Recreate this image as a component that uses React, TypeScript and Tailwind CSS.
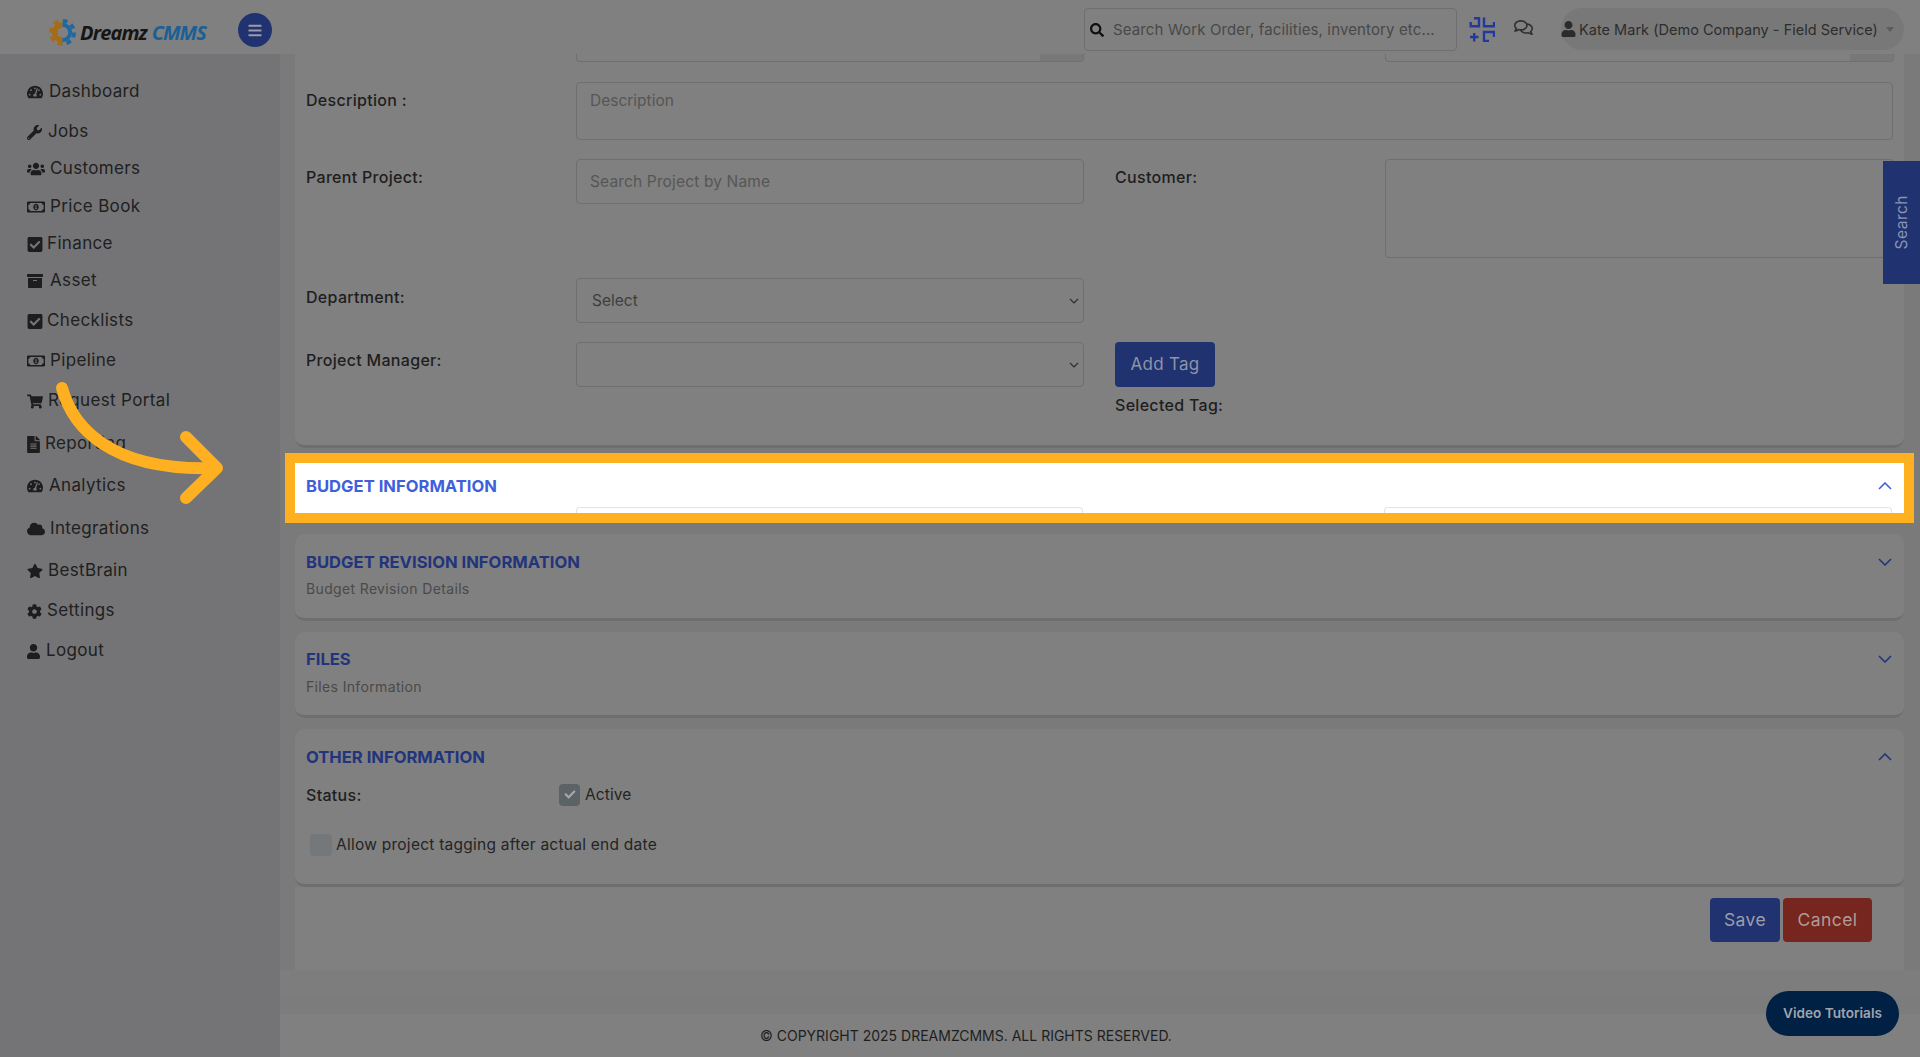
import React from "react";
import {
  FaTachometerAlt, FaWrench, FaUsers, FaRegMoneyBillAlt, FaCheckSquare, FaArchive,
  FaShoppingCart, FaFileAlt, FaCloud, FaStar, FaCog, FaUser, FaBars, FaSearch, FaRegComments, FaCheck,
} from "react-icons/fa";

const nav = [
  { label: "Dashboard", Icon: FaTachometerAlt, icon: "w-[16px] h-[16px]", col: "w-[22px]", row: "mt-0" },
  { label: "Jobs", Icon: FaWrench, icon: "w-[15px] h-[15px]", col: "w-[21px]", row: "mt-[10px]" },
  { label: "Customers", Icon: FaUsers, icon: "w-[18px] h-[16px]", col: "w-[23px]", row: "mt-[7px]" },
  { label: "Price Book", Icon: FaRegMoneyBillAlt, icon: "w-[18px] h-[18px]", col: "w-[23px]", row: "mt-[8px]" },
  { label: "Finance", Icon: FaCheckSquare, icon: "w-[16px] h-[17px]", col: "w-[20px]", row: "mt-[7px]" },
  { label: "Asset", Icon: FaArchive, icon: "w-[16px] h-[16px]", col: "w-[23px]", row: "mt-[7px]" },
  { label: "Checklists", Icon: FaCheckSquare, icon: "w-[16px] h-[17px]", col: "w-[20px]", row: "mt-[10px]" },
  { label: "Pipeline", Icon: FaRegMoneyBillAlt, icon: "w-[18px] h-[18px]", col: "w-[23px]", row: "mt-[10px]" },
  { label: "Request Portal", Icon: FaShoppingCart, icon: "w-[16px] h-[15px]", col: "w-[21px]", row: "mt-[10px]" },
  { label: "Reporting", Icon: FaFileAlt, icon: "w-[13px] h-[17px]", col: "w-[18px]", row: "mt-[13px]" },
  { label: "Analytics", Icon: FaTachometerAlt, icon: "w-[16px] h-[16px]", col: "w-[22px]", row: "mt-[12px]" },
  { label: "Integrations", Icon: FaCloud, icon: "w-[18px] h-[16px]", col: "w-[23px]", row: "mt-[13px]" },
  { label: "BestBrain", Icon: FaStar, icon: "w-[16px] h-[16px]", col: "w-[21px]", row: "mt-[12px]" },
  { label: "Settings", Icon: FaCog, icon: "w-[15px] h-[15px]", col: "w-[20px]", row: "mt-[10px]" },
  { label: "Logout", Icon: FaUser, icon: "w-[13px] h-[15px]", col: "w-[19px]", row: "mt-[10px]" },
];

const labelCls = "text-[16px] font-medium text-[#1e1e1e] tracking-[0.3px]";
const fieldCls = "border border-[#6f6f6f] rounded-[4px] bg-[#808080]";
const headCls = "text-[16.6px] font-bold tracking-[0px]";

function Chevron({ up, cls }: { up?: boolean; cls: string }) {
  return (
    <svg viewBox="0 0 14 8" className={"w-[14px] h-[8px] " + cls} fill="none" stroke="currentColor" strokeWidth="1.6">
      <polyline points={up ? "1,7 7,1 13,7" : "1,1 7,7 13,1"} />
    </svg>
  );
}

function SelectBox({ children }: { children?: React.ReactNode }) {
  return (
    <div className={"w-[508px] h-[45px] flex items-center justify-between pl-[15px] pr-[4px] " + fieldCls}>
      <span className="text-[15.5px] text-[#3e3e3e]">{children}</span>
      <svg viewBox="0 0 10 6" className="w-[10px] h-[6px] text-[#2e2e2e]" fill="none" stroke="currentColor" strokeWidth="1.2">
        <polyline points="1,1 5,5 9,1" />
      </svg>
    </div>
  );
}

function Logo() {
  return (
    <div className="flex items-center ml-[49px] w-[189px] mt-[18px]">
      <svg viewBox="0 0 28 30" className="w-[27px] h-[29px] shrink-0">
        <defs>
          <clipPath id="lh"><rect x="0" y="0" width="14" height="30" /></clipPath>
          <clipPath id="rh"><rect x="14" y="0" width="14" height="30" /></clipPath>
        </defs>
        <g clipPath="url(#lh)" fill="none" stroke="#a46c18">
          <circle cx="14" cy="15" r="8" strokeWidth="6" />
          <circle cx="14" cy="15" r="12" strokeWidth="4" strokeDasharray="5 4.4" />
        </g>
        <g clipPath="url(#rh)" fill="none" stroke="#1f68a0">
          <circle cx="14" cy="15" r="8" strokeWidth="4" />
          <circle cx="14" cy="15" r="12" strokeWidth="4" strokeDasharray="5 4.4" />
        </g>
        <path d="M9 12h7M10 15h6M9 18h7" stroke="#808080" strokeWidth="1.3" />
      </svg>
      <span className="ml-[4px] text-[20px] font-bold italic text-[#161616] font-['Open_Sans',sans-serif] tracking-[-0.9px] leading-none">Dreamz</span>
      <span className="ml-[5px] text-[20px] font-bold italic text-[#1a5f96] font-['Open_Sans',sans-serif] tracking-[-1px] leading-none">CMMS</span>
    </div>
  );
}

function ExitIcon() {
  return (
    <svg viewBox="0 0 26 25" className="w-[26px] h-[25px] text-[#22389a]" fill="none" stroke="currentColor" strokeWidth="2.4">
      <path d="M1.7 5V9.3H10V1.2H5" />
      <path d="M15 0.5V9.3H25V5" />
      <path d="M1 20H9.5M5.2 16V24.5" />
      <path d="M25 20V15H15V24H20" />
    </svg>
  );
}

export default function App() {
  return (
    <div className="relative w-full h-[1057px] overflow-hidden flex flex-col bg-[#7a7a7a] font-['Inter','Noto_Sans',sans-serif]">
      {/* header */}
      <header className="h-[54px] shrink-0 flex items-start bg-[#808080] relative z-10">
        <Logo />
        <button className="w-[34px] h-[34px] mt-[13px] rounded-full bg-[#20326f] flex items-center justify-center text-[#9a9ca8]">
          <FaBars className="w-[14px] h-[15px]" />
        </button>
        <div className="ml-auto flex items-start mt-[8px]">
          <div className="w-[373px] h-[43px] border border-[#6f6f6f] rounded-[4px] flex items-center pl-[5px]">
            <FaSearch className="w-[14px] h-[14px] text-[#101010]" />
            <span className="ml-[9px] mt-[1px] text-[15px] text-[#484848] tracking-[0.13px] whitespace-nowrap">Search Work Order, facilities, inventory etc...</span>
          </div>
          <div className="ml-[12px] mt-[9px]"><ExitIcon /></div>
          <FaRegComments className="ml-[19px] mt-[11px] w-[19px] h-[17px] text-[#303030]" />
          <div className="ml-[28px] mr-[16px] w-[343px] h-[42px] rounded-full bg-[#787878] flex items-center">
            <FaUser className="w-[15px] h-[16px] text-[#2b2b2b]" />
            <span className="ml-[3px] mt-[2px] text-[14.5px] text-[#2d2d2d] tracking-[0.02px] whitespace-nowrap">Kate Mark (Demo Company - Field Service)</span>
            <span className="ml-[8px] w-0 h-0 border-x-[4px] border-x-transparent border-t-[5px] border-t-[#5c5c5c]" />
          </div>
        </div>
      </header>

      <div className="flex flex-1 min-h-0">
        {/* sidebar */}
        <aside className="w-[280px] shrink-0 bg-[#747476] pt-[23px] pl-[27px]">
          <ul>
            {nav.map(({ label, Icon, icon, col, row }) => (
              <li key={label} className={"h-[30px] flex items-center " + row}>
                <span className={"shrink-0 " + col}>
                  <Icon className={"text-[#1d1d1d] " + icon} />
                </span>
                <span className="text-[17px] text-[#202020] tracking-[0.35px]">{label}</span>
              </li>
            ))}
          </ul>
        </aside>

        {/* main */}
        <main className="flex-1 min-w-0 flex flex-col">
          <div className="pl-[15px] pr-[16px]">
            {/* basic info card */}
            <section className="h-[394px] bg-[#808080] rounded-b-[10px] border-b-[3px] border-[#6e6e6e] pl-[11px] pr-[10px]">
              <div className="flex h-[8px]">
                <div className="ml-[270px] w-[508px] border border-t-0 border-[#6f6f6f] rounded-b-[4px] flex justify-end">
                  <div className="w-[43px] bg-[#787878] rounded-br-[4px]" />
                </div>
                <div className="ml-[301px] w-[509px] border border-t-0 border-[#6f6f6f] rounded-b-[4px] flex justify-end">
                  <div className="w-[43px] bg-[#787878] rounded-br-[4px]" />
                </div>
              </div>

              <div className="flex mt-[20px]">
                <div className={"w-[270px] pt-[6px] " + labelCls}>Description :</div>
                <textarea
                  readOnly
                  placeholder="Description"
                  className={"w-[1317px] h-[58px] px-[13px] py-[6px] resize-none text-[15.5px] placeholder:text-[#565656] outline-none " + fieldCls}
                />
              </div>

              <div className="flex mt-[19px]">
                <div className={"w-[270px] pt-[6px] " + labelCls}>Parent Project:</div>
                <input
                  readOnly
                  placeholder="Search Project by Name"
                  className={"w-[508px] h-[45px] px-[13px] text-[15.5px] tracking-[0.15px] placeholder:text-[#565656] outline-none " + fieldCls}
                />
                <div className={"ml-[31px] w-[270px] pt-[6px] " + labelCls}>Customer:</div>
                <div className={"w-[509px] h-[99px] " + fieldCls} />
              </div>

              <div className="flex mt-[20px]">
                <div className={"w-[270px] pt-[7px] " + labelCls}>Department:</div>
                <SelectBox>Select</SelectBox>
              </div>

              <div className="flex mt-[19px]">
                <div className={"w-[270px] pt-[6px] " + labelCls}>Project Manager:</div>
                <SelectBox />
                <div className="ml-[31px]">
                  <button className="w-[100px] h-[45px] rounded-[4px] bg-[#20326f] text-[17px] text-[#8f94a8] tracking-[0.3px]">Add Tag</button>
                  <div className={"mt-[6px] " + labelCls}>Selected Tag:</div>
                </div>
              </div>
            </section>

            {/* highlighted section */}
            <section className="mt-[15px] h-[50px] bg-white outline-[10px] outline-solid outline-[#ffb020] relative z-10 pl-[11px] pr-[12px] overflow-hidden">
              <div className="h-[44px] flex items-center justify-between pt-[2px]">
                <h2 className={headCls + " text-[#3f5fdb]"}>BUDGET INFORMATION</h2>
                <Chevron up cls="text-[#3f5fdb]" />
              </div>
              <div className="flex h-[8px]">
                <div className="ml-[270px] w-[508px] border border-b-0 border-[#e3e3e3] rounded-t-[4px]" />
                <div className="ml-[301px] w-[509px] border border-b-0 border-[#e3e3e3] rounded-t-[4px]" />
              </div>
            </section>

            {/* collapsed sections */}
            <div className="mt-[21px] bg-[#808080] rounded-[10px] border-b-[3px] border-[#6e6e6e] h-[87px] pl-[11px] pr-[12px] pt-[16px]">
              <div className="flex items-center justify-between">
                <h2 className={headCls + " text-[#22347c]"}>BUDGET REVISION INFORMATION</h2>
                <Chevron cls="text-[#22347c]" />
              </div>
              <p className="mt-[3px] text-[14px] text-[#4a4a4a] tracking-[0.35px]">Budget Revision Details</p>
            </div>

            <div className="mt-[11px] bg-[#808080] rounded-[10px] border-b-[3px] border-[#6e6e6e] h-[86px] pl-[11px] pr-[12px] pt-[15px]">
              <div className="flex items-center justify-between">
                <h2 className={headCls + " text-[#22347c]"}>FILES</h2>
                <Chevron cls="text-[#22347c]" />
              </div>
              <p className="mt-[4px] text-[14px] text-[#4a4a4a] tracking-[0.35px]">Files Information</p>
            </div>

            <div className="mt-[11px] bg-[#808080] rounded-[10px] border-b-[3px] border-[#6e6e6e] h-[158px] pl-[11px] pr-[12px] pt-[16px]">
              <div className="flex items-center justify-between">
                <h2 className={headCls + " text-[#22347c]"}>OTHER INFORMATION</h2>
                <Chevron up cls="text-[#22347c]" />
              </div>
              <div className="flex items-center mt-[14px] h-[22px]">
                <div className={"w-[253px] " + labelCls}>Status:</div>
                <span className="w-[21px] h-[22px] rounded-[4px] bg-[#5c6366] flex items-center justify-center">
                  <FaCheck className="w-[12px] h-[11px] text-[#a5a8a8]" />
                </span>
                <span className="ml-[5px] text-[15.5px] text-[#242424] tracking-[0.1px]">Active</span>
              </div>
              <div className="flex items-center mt-[28px] h-[22px] pl-[4px]">
                <span className="w-[22px] h-[22px] rounded-[4px] bg-[#74787b]" />
                <span className="ml-[4px] text-[15.5px] text-[#242424] tracking-[0.25px]">Allow project tagging after actual end date</span>
              </div>
            </div>

            {/* actions */}
            <div className="h-[83px] bg-[#808080] flex justify-end items-start pt-[11px] pr-[32px] gap-[3px]">
              <button className="w-[70px] h-[44px] rounded-[4px] bg-[#20326f] text-[17.5px] text-[#9a9eb0] tracking-[0.4px]">Save</button>
              <button className="w-[89px] h-[44px] rounded-[4px] bg-[#76261e] text-[17.5px] text-[#b09c98] tracking-[0.4px]">Cancel</button>
            </div>
          </div>

          <div className="h-[25px] bg-[#7d7d7d]" />
          <div className="h-[19px] bg-[#7c7c7c]" />
          {/* footer */}
          <footer className="flex-1 bg-[#808080] pl-[480px] pt-[11px] text-[14px] text-[#1e1e1e] whitespace-nowrap">
            © COPYRIGHT 2025 DREAMZCMMS. ALL RIGHTS RESERVED.
          </footer>
        </main>
      </div>

      {/* floating search tab */}
      <div className="absolute right-0 top-[161px] w-[37px] h-[123px] bg-[#20326f] flex items-center justify-center z-20">
        <span className="[writing-mode:vertical-rl] rotate-180 text-[15.5px] text-[#8a93b5] tracking-[0.5px]">Search</span>
      </div>

      {/* floating video button */}
      <button className="absolute left-[1766px] top-[991px] w-[133px] h-[45px] rounded-full bg-[#002044] text-[13.6px] font-semibold text-[#a0a4ad] z-20">
        Video Tutorials
      </button>

      {/* annotation arrow */}
      <svg className="absolute left-0 top-0 w-[280px] h-[560px] z-30 pointer-events-none" viewBox="0 0 280 560" fill="none" stroke="#ffb020" strokeWidth="12" strokeLinecap="round" strokeLinejoin="round">
        <path d="M62 388C72 425 108 472 216 468" />
        <path d="M186 437L217 468L186 498" />
      </svg>
    </div>
  );
}
